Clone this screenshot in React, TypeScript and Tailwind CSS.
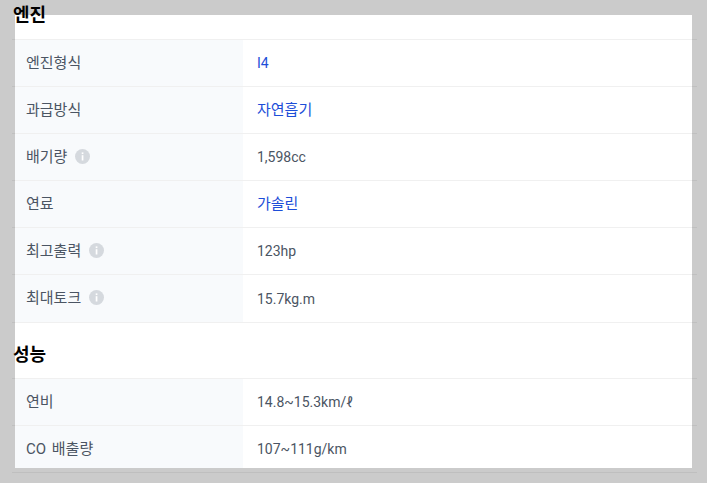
const engine: [string, string, boolean, boolean][] = [
  ["엔진형식", "I4", true, false],
  ["과급방식", "자연흡기", true, false],
  ["배기량", "1,598cc", false, true],
  ["연료", "가솔린", true, false],
  ["최고출력", "123hp", false, true],
  ["최대토크", "15.7kg.m", false, true],
];

function Info() {
  return (
    <svg width="15" height="15" viewBox="0 0 15 15" className="shrink-0">
      <circle cx="7.5" cy="7.5" r="7.5" fill="#d5d9de" />
      <rect x="6.7" y="6.2" width="1.7" height="5.3" fill="#fff" />
      <rect x="6.7" y="3.4" width="1.7" height="1.7" fill="#fff" />
    </svg>
  );
}

function Row({ label, value, link, info, last, tall, hangul }: { label: string; value: string; link?: boolean; info?: boolean; last?: boolean; tall?: boolean; hangul?: boolean }) {
  return (
    <div className={`flex items-start border-b border-[#0000000f] pl-[3px] ${tall ? "h-[48px]" : "h-[47px]"}`}>
      <div className={`flex w-[228px] items-start gap-[8px] bg-[#f8fafc] pl-[11px] pt-[12px] text-[15px] leading-[22px] text-[#4b5563] ${last ? "h-[42px]" : tall ? "h-[47px]" : "h-[46px]"}`}>
        <span className="[word-spacing:2px]">{label}</span>
        {info && <span className="pt-[3px]"><Info /></span>}
      </div>
      <div className={`pl-[14px] leading-[22px] ${tall ? "pt-[13px]" : "pt-[12px]"} ${hangul ? "text-[15px]" : "text-[14px]"} ${link ? "text-[#1d4ed8]" : "text-[#4b5563]"}`}>
        {value}
      </div>
    </div>
  );
}

export default function App() {
  return (
    <div
      className="h-screen overflow-hidden bg-[#cbcbcb] px-[15px] pt-[15px]"
      style={{ fontFamily: 'Roboto, "Noto Sans CJK KR", "Noto Sans", sans-serif' }}
    >
      <div className="flow-root h-[453px] w-[677px] bg-white">
        <div className="-ml-[3px] w-[685px]">
          <div className="-mt-[15px] h-[40px] border-b border-[#0000000f]">
            <h2 className="pl-[1px] pt-[3px] text-[18px] leading-[24px] font-semibold text-black">엔진</h2>
          </div>
          {engine.map(([l, v, link, info], i) => (
            <Row key={l} label={l} value={v} link={link} info={info} tall={i === 5} hangul={i === 1 || i === 3} />
          ))}
          <div className="h-[56px] border-b border-[#0000000f]">
            <h2 className="pl-[1px] pt-[20px] text-[18px] leading-[24px] font-semibold text-black">성능</h2>
          </div>
          <Row label="연비" value="14.8~15.3km/ℓ" />
          <Row label="CO 배출량" value="107~111g/km" last />
        </div>
      </div>
    </div>
  );
}
